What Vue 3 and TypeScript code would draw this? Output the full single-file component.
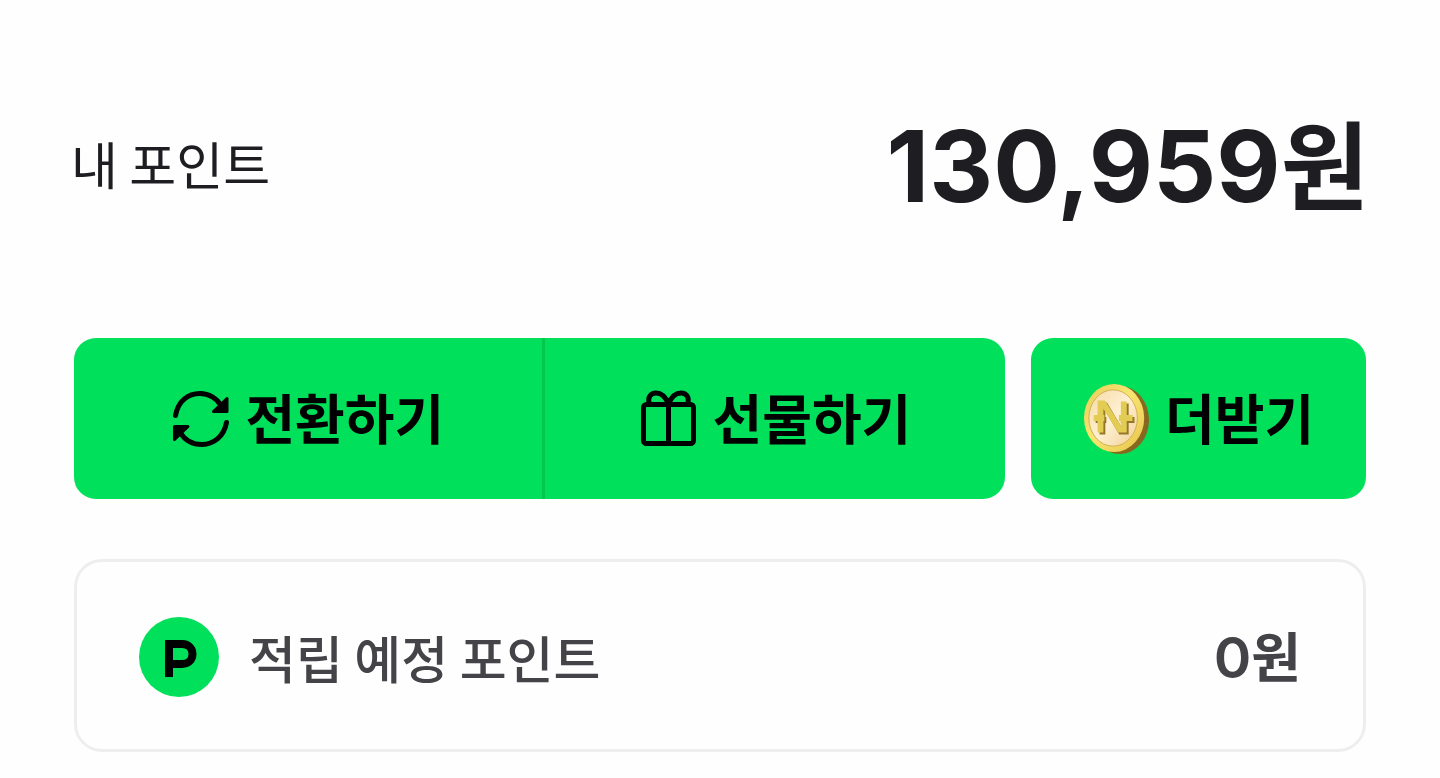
<script setup lang="ts">
const balance = 130959
const pending = 0

const format = (value: number): string => value.toLocaleString('en-US')
</script>

<template>
  <main class="wallet">
    <section class="summary">
      <h1 class="summary-label">내 포인트</h1>
      <p class="balance"><span class="digits">{{ format(balance) }}</span>원</p>
    </section>

    <div class="actions">
      <div class="action-group">
        <button class="action convert" type="button">
          <svg class="icon" viewBox="0 0 60 60" aria-hidden="true">
            <g fill="none" stroke="currentColor" stroke-width="5" stroke-linecap="round">
              <path d="M4.500 26.500C7 12 17 4.500 29 4.500C38 4.500 46 9.500 50 16.500" />
              <path d="M55.500 33.500C53 48 42 55.500 31 55.500C21 55.500 13.500 50.500 9.500 44" />
            </g>
            <path d="M56 9.500V22.500H42.500Z M3.500 50.500V37.500H17Z" fill="currentColor" stroke="currentColor" stroke-width="3" stroke-linejoin="round" />
          </svg>
          <span class="action-text">전환하기</span>
        </button>
        <button class="action gift" type="button">
          <svg class="icon" viewBox="0 0 60 60" aria-hidden="true">
            <g fill="none" stroke="currentColor" stroke-width="5" stroke-linecap="round" stroke-linejoin="round">
              <rect x="4.500" y="15.500" width="50" height="39" rx="3" />
              <path d="M29.500 15.500V54" />
              <path d="M10.500 15C8 8 12 4 17 4C23 4 27 9 29.500 15C32 9 36 4 42 4C47 4 51 8 48.500 15" />
            </g>
          </svg>
          <span class="action-text">선물하기</span>
        </button>
      </div>
      <button class="action extra" type="button">
        <svg class="coin" viewBox="0 0 70 74" aria-hidden="true">
          <defs>
            <linearGradient id="coin-rim" x1="0" y1="0" x2="1" y2="1">
              <stop offset="0" stop-color="#e6cc58" />
              <stop offset="0.450" stop-color="#f9e672" />
              <stop offset="1" stop-color="#e7c44b" />
            </linearGradient>
            <linearGradient id="coin-face" x1="0" y1="0" x2="1" y2="1">
              <stop offset="0" stop-color="#f4d9a4" />
              <stop offset="0.500" stop-color="#fff0d2" />
              <stop offset="1" stop-color="#f0d095" />
            </linearGradient>
          </defs>
          <ellipse cx="38" cy="38" rx="30" ry="35" fill="#876820" />
          <ellipse cx="32" cy="36" rx="31" ry="35" fill="url(#coin-rim)" />
          <ellipse cx="31" cy="36" rx="25" ry="29" fill="url(#coin-face)" stroke="#cfae50" stroke-width="1" />
          <g fill="none" stroke-linejoin="miter">
            <path d="M20 53V23H23L39 50H44V21M13 38H24M39 38H53" stroke="#967629" stroke-width="6" />
            <path d="M18 51V21H21L38 48H42V19M11 36H22M37 36H51" stroke="#e3cc54" stroke-width="6" />
          </g>
        </svg>
        <span class="action-text">더받기</span>
      </button>
    </div>

    <section class="pending">
      <svg class="badge" viewBox="0 0 80 80" aria-hidden="true">
        <circle cx="40" cy="40" r="40" fill="#00e05a" />
        <path d="M30 60V27H43C57 27 57 47 43 47H30" fill="none" stroke="#000" stroke-width="8" />
      </svg>
      <h2 class="pending-label">적립 예정 포인트</h2>
      <p class="pending-value"><span class="digits">{{ format(pending) }}</span>원</p>
    </section>
  </main>
</template>

<style>
body {
  margin: 0;
  background: #fefefe;
}
</style>

<style scoped>
.wallet {
  box-sizing: border-box;
  padding: 88px 74px 26px;
  color: #1e1e22;
  font-family: "Noto Sans CJK KR", sans-serif;
}

h1,
h2,
p {
  margin: 0;
}

.summary {
  display: flex;
  align-items: center;
  justify-content: space-between;
  height: 150px;
  margin: 0 -3px;
}

.summary-label {
  font-size: 51px;
  font-weight: 400;
  line-height: 72px;
}

.balance {
  font-size: 96px;
  font-weight: 700;
  line-height: 144px;
  white-space: nowrap;
}

.digits {
  font-family: Inter, "Liberation Sans", sans-serif;
}

.balance .digits {
  font-size: 99px;
}

.actions {
  display: flex;
  gap: 26px;
  margin-top: 100px;
}

.action-group {
  display: flex;
  flex: 932;
  overflow: hidden;
  border-radius: 22px;
}

.action {
  display: flex;
  flex: 1;
  align-items: center;
  justify-content: center;
  gap: 14px;
  height: 161px;
  padding: 0;
  border: 0;
  background: #00e05a;
  color: #000;
  font-family: inherit;
  font-size: 54px;
  font-weight: 700;
  line-height: 80px;
  white-space: nowrap;
  cursor: pointer;
}

.action-text {
  padding-bottom: 4px;
}

.action.convert {
  flex: 468;
}

.action.gift {
  flex: 461;
  border-left: 3px solid #04c750;
}

.action.extra {
  flex: 335;
  border-radius: 22px;
}

.icon {
  width: 60px;
  height: 60px;
}

.coin {
  width: 68px;
  height: 72px;
}

.pending {
  display: flex;
  align-items: center;
  box-sizing: border-box;
  height: 193px;
  margin-top: 60px;
  padding: 2px 62px 0;
  border: 3px solid #eeeeef;
  border-radius: 28px;
  color: #434348;
}

.badge {
  width: 80px;
  height: 80px;
  margin-right: 30px;
}

.pending-label {
  font-size: 51px;
  font-weight: 500;
  line-height: 80px;
}

.pending-value {
  margin-left: auto;
  font-size: 54px;
  font-weight: 700;
  line-height: 80px;
}

.pending-value .digits {
  font-size: 57px;
  font-weight: 600;
}
</style>
